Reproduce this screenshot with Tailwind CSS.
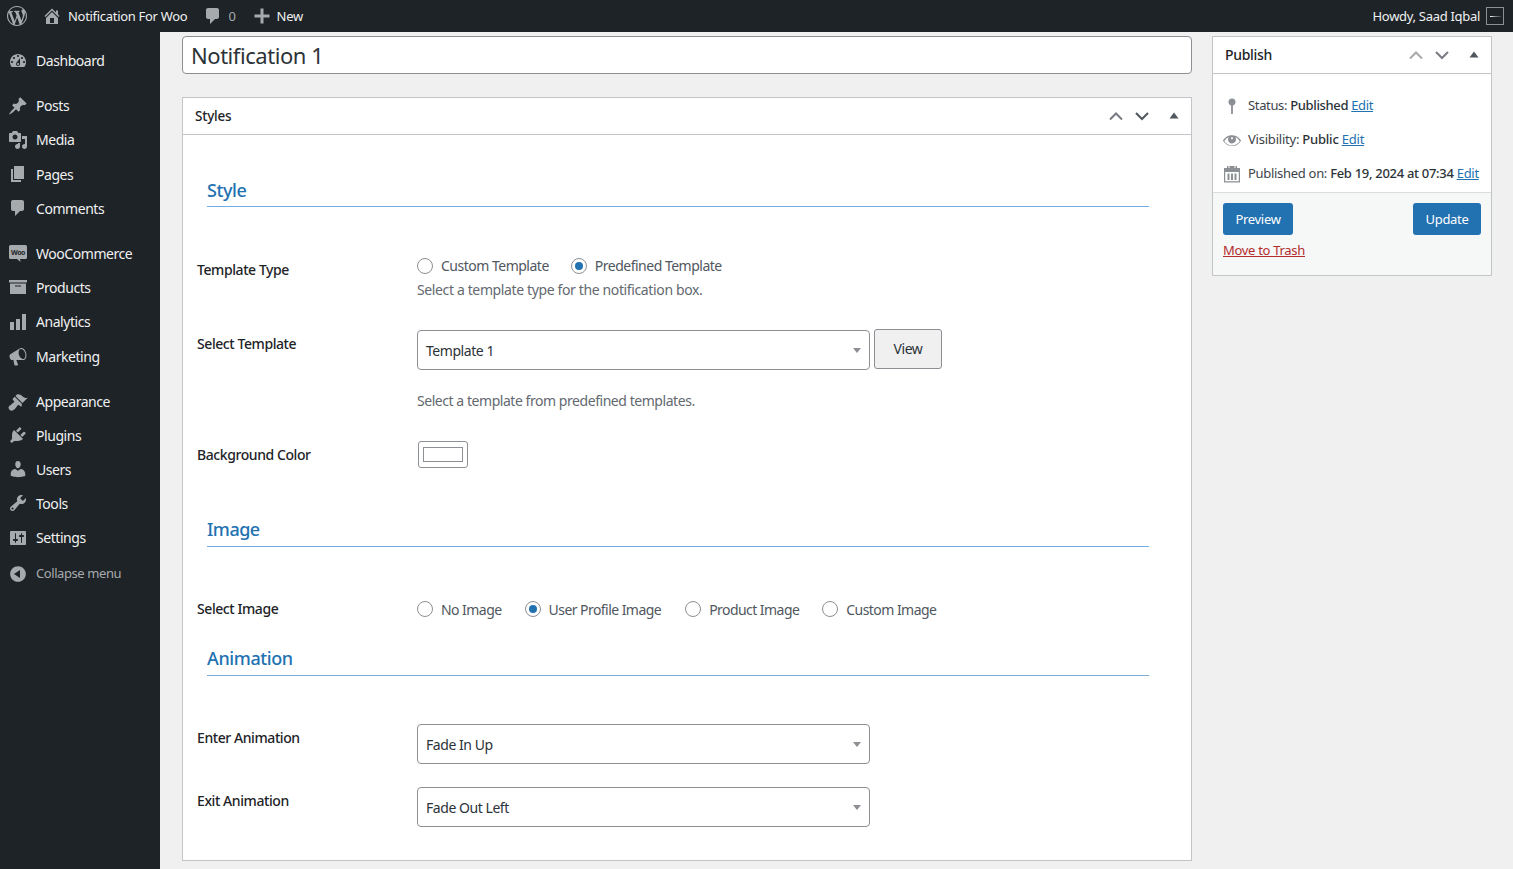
<!doctype html>
<html>
<head>
  <meta charset="UTF-8">
  <meta name="viewport" content="width=device-width, initial-scale=1.0">
  <title>Edit Notification</title>
  <script src="https://cdn.jsdelivr.net/npm/@tailwindcss/browser@4"></script>
</head>
<body class="bg-[#f0f0f1] font-['Noto_Sans',sans-serif] text-[13px] text-[#3c434a] overflow-hidden">
<div class="flex h-[869px] w-[1513px] flex-col overflow-hidden">

  <!-- Admin bar -->
  <header class="flex h-8 shrink-0 items-center bg-[#1d2327] text-[13px] tracking-[-0.3px] text-[#f0f0f1]">
    <svg class="ml-[7px] h-5 w-5 fill-[#a7aaad]" viewBox="0 0 20 20"><path d="M20 10c0-5.51-4.49-10-10-10C4.48 0 0 4.49 0 10c0 5.52 4.48 10 10 10 5.51 0 10-4.48 10-10zM7.78 15.37L4.37 6.22c.55-.02 1.17-.08 1.17-.08.5-.06.44-1.13-.06-1.11 0 0-1.45.11-2.37.11-.18 0-.37 0-.58-.01C4.12 2.69 6.87 1.11 10 1.11c2.33 0 4.45.87 6.05 2.34-.68-.11-1.65.39-1.65 1.58 0 .74.45 1.36.9 2.1.35.61.55 1.36.55 2.46 0 1.49-1.4 5-1.4 5l-3.03-8.37c.54-.02.82-.17.82-.17.5-.05.44-1.25-.06-1.22 0 0-1.44.12-2.38.12-.87 0-2.33-.12-2.33-.12-.5-.03-.56 1.2-.06 1.22l.92.08 1.26 3.41zM17.41 10c.24-.64.74-1.87.43-4.25.7 1.29 1.05 2.71 1.05 4.25 0 3.29-1.73 6.24-4.4 7.78.97-2.59 1.94-5.21 2.92-7.78zM6.1 18.09C3.12 16.65 1.11 13.53 1.11 10c0-1.3.23-2.48.72-3.59C3.25 10.3 4.67 14.2 6.1 18.09zm4.03-6.63l2.58 6.98c-.86.29-1.76.45-2.71.45-.79 0-1.57-.11-2.29-.33.81-2.38 1.62-4.74 2.42-7.1z"/></svg>
    <svg class="ml-[15px] h-5 w-5 fill-[#a7aaad]" viewBox="0 0 20 20"><path d="M16 8.5l1.53 1.53-1.06 1.06L10 4.62l-6.47 6.47-1.06-1.06L10 2.5l4 4v-2h2v4zm-6-2.46l6 5.99V18H4v-5.97zM12 17v-5H8v5h4z"/></svg>
    <span class="ml-[6px] pt-[2px]">Notification For Woo</span>
    <svg class="ml-[16px] h-5 w-5 fill-[#a7aaad]" viewBox="0 0 20 20"><path d="M5 2h9c1.1 0 2 .9 2 2v7c0 1.1-.9 2-2 2h-2l-5 5v-5H5c-1.1 0-2-.9-2-2V4c0-1.1.9-2 2-2z"/></svg>
    <span class="ml-[5px] pt-[2px] text-[#a7aaad]">0</span>
    <svg class="ml-[16px] h-5 w-5 fill-[#a7aaad]" viewBox="0 0 20 20"><path d="M17.5 8.5v3h-6v6h-3v-6h-6v-3h6v-6h3v6z"/></svg>
    <span class="ml-[5px] pt-[2px]">New</span>
    <span class="ml-auto pt-[2px]">Howdy, Saad Iqbal</span>
    <span class="ml-[6px] mr-[9px] flex h-[18px] w-[18px] items-center justify-center border border-[#8c8f94] bg-[#1d2327]"><span class="h-px w-[11px] bg-gradient-to-r from-white via-[#888] to-[#444]"></span></span>
  </header>

  <div class="flex min-h-0 flex-1">
    <!-- Sidebar -->
    <aside class="w-40 shrink-0 bg-[#1d2327] pt-[11.6px] text-[14px] tracking-[-0.45px] text-[#f0f0f1]">
      <nav class="flex flex-col">
        <a class="flex h-[34.2px] items-center gap-2 pl-2"><svg class="h-5 w-5 fill-[#a7aaad]" viewBox="0 0 20 20"><path d="M3.76 16h12.48c1.1-1.37 1.76-3.11 1.76-5 0-4.42-3.58-8-8-8s-8 3.58-8 8c0 1.89.66 3.63 1.76 5zM10 4c.55 0 1 .45 1 1s-.45 1-1 1-1-.45-1-1 .45-1 1-1zM6 6c.55 0 1 .45 1 1s-.45 1-1 1-1-.45-1-1 .45-1 1-1zm8 0c.55 0 1 .45 1 1s-.45 1-1 1-1-.45-1-1 .45-1 1-1zm-5.37 5.55L12 7v6c0 1.1-.9 2-2 2s-2-.9-2-2c0-.57.24-1.08.63-1.45zM4 10c.55 0 1 .45 1 1s-.45 1-1 1-1-.45-1-1 .45-1 1-1zm12 0c.55 0 1 .45 1 1s-.45 1-1 1-1-.45-1-1 .45-1 1-1zm-5 3c0-.55-.45-1-1-1s-1 .45-1 1 .45 1 1 1 1-.45 1-1z"/></svg>Dashboard</a>
        <a class="mt-[10.8px] flex h-[34.2px] items-center gap-2 pl-2"><svg class="h-5 w-5 fill-[#a7aaad]" viewBox="0 0 20 20"><path d="M10.44 3.02l1.82-1.82 6.36 6.35-1.83 1.82c-1.05-.68-2.48-.57-3.41.36l-.75.75c-.92.93-1.04 2.35-.35 3.41l-1.83 1.82-2.41-2.41-2.8 2.79c-.42.42-3.38 2.71-3.8 2.29s1.86-3.39 2.28-3.81l2.79-2.79L4.1 9.36l1.83-1.82c1.05.69 2.48.57 3.41-.36l.75-.75c.93-.92 1.05-2.35.35-3.41z"/></svg>Posts</a>
        <a class="flex h-[34.2px] items-center gap-2 pl-2"><svg class="h-5 w-5 fill-[#a7aaad]" viewBox="0 0 20 20"><path d="M13 11V4c0-.55-.45-1-1-1h-1.67L9 1H5L3.67 3H2c-.55 0-1 .45-1 1v7c0 .55.45 1 1 1h10c.55 0 1-.45 1-1zM7 4.5c1.38 0 2.5 1.12 2.5 2.5S8.38 9.5 7 9.5 4.5 8.38 4.5 7 5.62 4.5 7 4.5zM14 6h5v10.5c0 1.38-1.12 2.5-2.5 2.5S14 17.88 14 16.5s1.12-2.5 2.5-2.5c.17 0 .34.02.5.05V9h-3V6zm-4 8.05V13h2v3.5c0 1.38-1.12 2.5-2.5 2.5S7 17.88 7 16.5 8.12 14 9.5 14c.17 0 .34.02.5.05z"/></svg>Media</a>
        <a class="flex h-[34.2px] items-center gap-2 pl-2"><svg class="h-5 w-5 fill-[#a7aaad]" viewBox="0 0 20 20"><path d="M6 15V2h10v13H6zm-1 1h8v2H3V5h2v11z"/></svg>Pages</a>
        <a class="flex h-[34.2px] items-center gap-2 pl-2"><svg class="h-5 w-5 fill-[#a7aaad]" viewBox="0 0 20 20"><path d="M5 2h9c1.1 0 2 .9 2 2v7c0 1.1-.9 2-2 2h-2l-5 5v-5H5c-1.1 0-2-.9-2-2V4c0-1.1.9-2 2-2z"/></svg>Comments</a>
        <a class="mt-[10.8px] flex h-[34.2px] items-center gap-2 pl-2"><svg class="h-5 w-5" viewBox="0 0 20 20"><path class="fill-[#a7aaad]" d="M2.5 2h15A1.5 1.5 0 0 1 19 3.500v11a1.500 1.500 0 0 1-1.500 1.500H12l.500 3-3.500-3H2.500A1.500 1.500 0 0 1 1 14.500v-11A1.500 1.500 0 0 1 2.500 2z"/><text x="10" y="11.500" text-anchor="middle" font-size="7" font-weight="700" class="fill-[#1d2327]">Woo</text></svg>WooCommerce</a>
        <a class="flex h-[34.2px] items-center gap-2 pl-2"><svg class="h-5 w-5 fill-[#a7aaad]" viewBox="0 0 20 20"><path fill-rule="evenodd" d="M19 3v2.500H1V3h18zM2 6.500h16V17H2V6.500zm11 3V8.500H7v1h6z"/></svg>Products</a>
        <a class="flex h-[34.2px] items-center gap-2 pl-2"><svg class="h-5 w-5 fill-[#a7aaad]" viewBox="0 0 20 20"><path d="M18 18V2h-4v16h4zm-6 0V7H8v11h4zm-6 0v-8H2v8h4z"/></svg>Analytics</a>
        <a class="mt-[0.8px] flex h-[34.2px] items-center gap-2 pl-2"><svg class="h-5 w-5 fill-[#a7aaad]" viewBox="0 0 20 20"><path fill-rule="evenodd" d="M18.150 5.940c.46 1.620.38 3.220-.02 4.480-.42 1.280-1.260 2.180-2.300 2.480-.16.06-.26.06-.4.06-.060.020-.12.020-.18.020-.060.020-.14.020-.22.020H8.300l1.700 4.600c.1.400-.2.800-.600.800H6.950c-.3 0-.5-.2-.55-.5l-1-4.900H4.250c-.5.060-1.080-.18-1.540-.62s-.88-1.080-1.060-1.880c-.24-.8-.2-1.560-.02-2.200.18-.62.58-1.080 1.060-1.300l9-5.420c.1-.06.18-.1.24-.16.3-.14.5-.22.74-.3 1.040-.3 2.240.1 3.220 1 .98.88 1.800 2.240 2.260 3.860zm-2.580 5.980c.4-.1.740-.34 1.040-.7.580-.7.860-1.760.86-3.040-.02-.64-.12-1.300-.3-2-.45-1.560-1.360-2.850-2.400-3.600-.8-.56-1.600-.8-2.300-.6-.38.1-.7.34-1 .68-.6.72-.88 1.760-.86 3.040 0 .64.1 1.300.3 2 .44 1.580 1.360 2.860 2.400 3.600.8.56 1.540.8 2.260.62z"/></svg>Marketing</a>
        <a class="mt-[10.8px] flex h-[34.2px] items-center gap-2 pl-2"><svg class="h-5 w-5 fill-[#a7aaad]" viewBox="0 0 20 20"><path d="M14.480 11.060L7.410 3.990l1.500-1.500c.5-.56 2.300-.47 3.510.32 1.210.8 1.430 1.280 2.910 2.100 1.180.64 2.450 1.260 4.450.85zm-.71.71L6.700 4.700 4.930 6.470c-.39.39-.39 1.020 0 1.410l1.060 1.060c.39.39.39 1.030 0 1.420-.6.6-1.430 1.110-2.210 1.690-.35.26-.7.53-1.010.84C1.430 13.230.5 14.88.5 15.400c0 .51.38 1.630 1.010 2.260.62.62 1.740 1.010 2.260 1.010.51 0 2.170-.93 3.510-2.270.31-.31.58-.66.84-1.010.58-.78 1.090-1.610 1.690-2.210.39-.39 1.030-.39 1.420 0l1.060 1.060c.39.39 1.020.39 1.410 0z"/></svg>Appearance</a>
        <a class="flex h-[33.4px] items-center gap-2 pl-2"><svg class="h-5 w-5 fill-[#a7aaad]" viewBox="0 0 20 20"><path d="M13.110 4.360L9.870 7.600 8 5.730l3.240-3.240c.35-.34 1.050-.2 1.560.32.52.51.66 1.210.31 1.550zm-8 1.770l.91-1.120 9.010 9.010-1.190.84c-.71.71-2.630 1.160-3.820 1.160H6.140L4.900 17.260c-.59.59-1.540.59-2.120 0-.59-.58-.59-1.530 0-2.120l1.240-1.240v-3.880c0-1.130.4-3.190 1.090-3.890zm7.260 3.970l3.240-3.240c.34-.35 1.040-.21 1.550.31.52.51.66 1.210.31 1.550l-3.240 3.250z"/></svg>Plugins</a>
        <a class="flex h-[34.2px] items-center gap-2 pl-2"><svg class="h-5 w-5 fill-[#a7aaad]" viewBox="0 0 20 20"><path d="M10 9.250c-2.270 0-2.730-3.440-2.730-3.440C7 4.020 7.820 2 9.970 2c2.160 0 2.980 2.020 2.710 3.810 0 0-.41 3.440-2.680 3.440zm0 2.570L12.720 10c2.390 0 4.520 2.330 4.520 4.530v2.490s-3.650 1.130-7.240 1.130c-3.650 0-7.240-1.130-7.240-1.130v-2.490c0-2.250 1.940-4.480 4.470-4.480z"/></svg>Users</a>
        <a class="flex h-[34.2px] items-center gap-2 pl-2"><svg class="h-5 w-5 fill-[#a7aaad]" viewBox="0 0 20 20"><path fill-rule="evenodd" d="M16.680 9.770c-1.340 1.340-3.300 1.670-4.950.99l-5.410 6.520c-.99.99-2.590.99-3.580 0s-.99-2.59 0-3.570l6.520-5.420c-.68-1.650-.35-3.610.99-4.950 1.280-1.280 3.120-1.620 4.720-1.060l-2.890 2.890 2.820 2.820 2.860-2.870c.53 1.580.18 3.390-1.080 4.650zM3.810 16.210c.4.39 1.040.39 1.430 0 .4-.4.4-1.040 0-1.430-.39-.4-1.030-.4-1.430 0-.39.39-.39 1.030 0 1.430z"/></svg>Tools</a>
        <a class="flex h-[34.2px] items-center gap-2 pl-2"><svg class="h-5 w-5 fill-[#a7aaad]" viewBox="0 0 20 20"><path fill-rule="evenodd" d="M18 16V4c0-.55-.45-1-1-1H3c-.55 0-1 .45-1 1v12c0 .55.45 1 1 1h14c.55 0 1-.45 1-1zM8 11h1c.55 0 1 .45 1 1s-.45 1-1 1H8v1.500c0 .28-.22.5-.5.5s-.5-.22-.5-.5V13H6c-.55 0-1-.45-1-1s.45-1 1-1h1V5.500c0-.28.22-.5.5-.5s.5.22.5.5V11zm5-2h-1c-.55 0-1-.45-1-1s.45-1 1-1h1V5.500c0-.28.22-.5.5-.5s.5.22.5.5V7h1c.55 0 1 .45 1 1s-.45 1-1 1h-1v5.500c0 .28-.22.5-.5.5s-.5-.22-.5-.5V9z"/></svg>Settings</a>
        <a class="mt-[2px] flex h-[34.2px] items-center gap-2 pl-2 text-[13px] tracking-[-0.42px] text-[#a7aaad]"><svg class="h-5 w-5 fill-[#a7aaad]" viewBox="0 0 20 20"><path fill-rule="evenodd" d="M10 2.160c4.330 0 7.840 3.510 7.840 7.840s-3.510 7.840-7.840 7.840-7.840-3.510-7.840-7.840S5.670 2.160 10 2.160zM12 14V6l-6 4z"/></svg>Collapse menu</a>
      </nav>
    </aside>

    <!-- Main -->
    <main class="flex min-w-0 flex-1 items-start gap-5 pl-[22px] pt-1">
      <div class="w-[1010px] shrink-0">
        <div class="flex h-[38px] items-center rounded border border-[#8c8f94] bg-white pl-2 text-[22px] tracking-[-0.45px] text-[#2c3338]">Notification 1</div>

        <section class="mt-[23px] h-[764px] border border-[#c3c4c7] bg-white text-[14px] tracking-[-0.45px]">
          <div class="flex h-[37px] items-center border-b border-[#c3c4c7] pl-3 pr-[12px] text-[13.5px] font-medium tracking-[-0.2px] text-[#1d2327]">
            <span>Styles</span>
            <svg class="ml-auto h-4 w-4 text-[#787c82]" viewBox="0 0 16 16" fill="none" stroke="currentColor" stroke-width="2"><path d="M2 11.500L8 5.500l6 6"/></svg>
            <svg class="ml-[10px] h-4 w-4 text-[#50575e]" viewBox="0 0 16 16" fill="none" stroke="currentColor" stroke-width="2"><path d="M2 5l6 6 6-6"/></svg>
            <svg class="ml-[18px] -mr-px h-3 w-3 fill-[#50575e]" viewBox="0 0 12 12"><path d="M6 2.500l4.500 6h-9z"/></svg>
          </div>

          <div class="pl-[14px]">
            <h2 class="ml-[10px] mt-10 flex h-[32px] w-[942px] items-center border-b border-[#72aee6] text-[18px] font-medium tracking-[-0.4px] text-[#2271b1]">Style</h2>

            <div class="mt-12 flex">
              <div class="mt-1 w-[220px] font-medium leading-[22px] tracking-[-0.42px] text-[#1d2327]">Template Type</div>
              <div>
                <div class="flex h-[22px] items-center tracking-[-0.5px] text-[#50575e]">
                  <span class="h-4 w-4 rounded-full border border-[#8c8f94] bg-white"></span><span class="ml-2 pb-[2px]">Custom Template</span>
                  <span class="ml-[22px] flex h-4 w-4 items-center justify-center rounded-full border border-[#8c8f94] bg-white"><span class="h-2 w-2 rounded-full bg-[#2271b1]"></span></span><span class="ml-2 pb-[2px]">Predefined Template</span>
                </div>
                <p class="mt-[2px] leading-[22px] tracking-[-0.37px] text-[#646970]">Select a template type for the notification box.</p>
              </div>
            </div>

            <div class="mt-7 flex">
              <div class="mt-1 w-[220px] font-medium leading-[22px] tracking-[-0.42px] text-[#1d2327]">Select Template</div>
              <div>
                <div class="flex items-start">
                  <div class="mt-px flex h-10 w-[453px] items-center justify-between rounded border border-[#8c8f94] bg-white pl-2 pr-2 text-[#2c3338]">Template 1<span class="h-0 w-0 border-x-4 border-t-[5px] border-x-transparent border-t-[#8c8f94]"></span></div>
                  <button class="ml-1 h-10 w-[68px] rounded-[3px] border border-[#8c8f94] bg-[#f0f0f1] pb-[2px] text-[#2c3338]">View</button>
                </div>
                <p class="mt-5 leading-[22px] text-[#646970]">Select a template from predefined templates.</p>
              </div>
            </div>

            <div class="mt-[29px] flex">
              <div class="mt-[3px] w-[220px] font-medium leading-[22px] tracking-[-0.42px] text-[#1d2327]">Background Color</div>
              <div class="ml-px flex h-[27px] w-[50px] items-center justify-center rounded-[3px] border border-[#8c8f94] bg-white"><span class="h-[15px] w-10 border border-[#8c8f94] bg-white"></span></div>
            </div>

            <h2 class="ml-[10px] mt-[47px] flex h-[32px] w-[942px] items-center border-b border-[#72aee6] pb-[2px] text-[18px] font-medium tracking-[-0.5px] text-[#2271b1]">Image</h2>

            <div class="mt-[51px] flex h-[22px] items-center">
              <div class="mb-[2px] w-[220px] font-medium tracking-[-0.42px] text-[#1d2327]">Select Image</div>
              <div class="flex items-center tracking-[-0.55px] text-[#50575e]">
                <span class="h-4 w-4 rounded-full border border-[#8c8f94] bg-white"></span><span class="ml-2">No Image</span>
                <span class="ml-[23px] flex h-4 w-4 items-center justify-center rounded-full border border-[#8c8f94] bg-white"><span class="h-2 w-2 rounded-full bg-[#2271b1]"></span></span><span class="ml-2">User Profile Image</span>
                <span class="ml-6 h-4 w-4 rounded-full border border-[#8c8f94] bg-white"></span><span class="ml-2">Product Image</span>
                <span class="ml-[23px] h-4 w-4 rounded-full border border-[#8c8f94] bg-white"></span><span class="ml-2">Custom Image</span>
              </div>
            </div>

            <h2 class="ml-[10px] mt-6 flex h-[32px] w-[942px] items-center border-b border-[#2271b1]/60 pb-[2px] text-[18px] font-medium tracking-[-0.4px] text-[#2271b1]">Animation</h2>

            <div class="mt-12 flex">
              <div class="mt-[3px] w-[220px] font-medium leading-[22px] tracking-[-0.42px] text-[#1d2327]">Enter Animation</div>
              <div class="flex h-10 w-[453px] items-center justify-between rounded border border-[#8c8f94] bg-white pl-2 pr-2 text-[#2c3338]">Fade In Up<span class="h-0 w-0 border-x-4 border-t-[5px] border-x-transparent border-t-[#8c8f94]"></span></div>
            </div>

            <div class="mt-[23px] flex">
              <div class="mt-[3px] w-[220px] font-medium leading-[22px] tracking-[-0.42px] text-[#1d2327]">Exit Animation</div>
              <div class="flex h-10 w-[453px] items-center justify-between rounded border border-[#8c8f94] bg-white pl-2 pr-2 text-[#2c3338]">Fade Out Left<span class="h-0 w-0 border-x-4 border-t-[5px] border-x-transparent border-t-[#8c8f94]"></span></div>
            </div>
          </div>
        </section>
      </div>

      <!-- Publish box -->
      <aside class="w-[280px] shrink-0 border border-[#c3c4c7] bg-white tracking-[-0.3px]">
        <div class="flex h-[37px] items-center border-b border-[#c3c4c7] pl-3 pr-[12px] text-[14px] font-medium text-[#1d2327]">
          <span class="pb-[2px]">Publish</span>
          <svg class="ml-auto h-4 w-4 text-[#a7aaad]" viewBox="0 0 16 16" fill="none" stroke="currentColor" stroke-width="2"><path d="M2 11.500L8 5.500l6 6"/></svg>
          <svg class="ml-[10px] h-4 w-4 text-[#787c82]" viewBox="0 0 16 16" fill="none" stroke="currentColor" stroke-width="2"><path d="M2 5l6 6 6-6"/></svg>
          <svg class="ml-[18px] -mr-px h-3 w-3 fill-[#50575e]" viewBox="0 0 12 12"><path d="M6 2.500l4.500 6h-9z"/></svg>
        </div>
        <div class="h-[119px] border-b border-[#dcdcde] pt-[15px]">
          <div class="flex h-[34px] items-center pl-[9px]">
            <svg class="h-5 w-5 fill-[#8c8f94]" viewBox="0 0 20 20"><path d="M13.500 6A3.500 3.500 0 0 0 6.500 6c0 1.600 1.100 3 2.600 3.400V18h1.800V9.400c1.500-.4 2.600-1.800 2.600-3.400z"/></svg>
            <span class="ml-[6px] tracking-[-0.35px]">Status: <span class="font-medium text-[#2c3338]">Published</span> <a class="text-[#2271b1] underline">Edit</a></span>
          </div>
          <div class="flex h-[34px] items-center pl-[9px]">
            <svg class="h-5 w-5 fill-[#8c8f94]" viewBox="0 0 20 20"><path d="M18.300 9.500C15 4.900 8.500 3.800 3.900 7.200c-1.200.9-2.200 2.100-3 3.400.2.400.5.8.8 1.200 3.300 4.600 9.600 5.600 14.200 2.400.9-.7 1.700-1.400 2.400-2.400.3-.4.5-.8.8-1.200-.3-.4-.5-.8-.8-1.100zm-8.300-2.300c.6 0 1 .4 1 1s-.4 1-1 1-1-.4-1-1 .4-1 1-1zm0 8.300c-3.100 0-6-1.600-7.700-4.200C3.500 9 5.100 7.800 7 7c-.7.7-1 1.500-1 2.400 0 2.200 1.700 4 4 4s4-1.700 4-3.900c0-.9-.3-1.800-.9-2.400 1.900.8 3.400 2 4.600 4.100-1.700 2.600-4.600 4.300-7.700 4.300z"/></svg>
            <span class="ml-[6px] tracking-[-0.22px]">Visibility: <span class="font-medium text-[#2c3338]">Public</span> <a class="text-[#2271b1] underline">Edit</a></span>
          </div>
          <div class="flex h-[34px] items-center pl-[9px]">
            <svg class="h-5 w-5 fill-[#8c8f94]" viewBox="0 0 20 20"><path fill-rule="evenodd" d="M5 2h1.500v2h1V2h5v2h1V2H15v2h3v14.500H2V4h3V2zM3.200 8v9.300h13.600V8H3.200zM5.500 9.500h2V16h-2V9.500zm3.500 0h2V16H9V9.500zm3.500 0h2V16h-2V9.500z"/></svg>
            <span class="ml-[6px] whitespace-nowrap">Published on: <span class="font-medium text-[#2c3338]">Feb 19, 2024 at 07:34</span> <a class="text-[#2271b1] underline">Edit</a></span>
          </div>
        </div>
        <div class="h-[82px] bg-[#f6f7f7] px-[10px] pt-[10px]">
          <div class="flex justify-between">
            <button class="h-8 w-[70px] rounded-[3px] bg-[#2271b1] pt-px text-white">Preview</button>
            <button class="h-8 w-[68px] rounded-[3px] bg-[#2271b1] pt-px text-white">Update</button>
          </div>
          <a class="mt-[5px] block leading-[20px] text-[#b32d2e] underline">Move to Trash</a>
        </div>
      </aside>
    </main>
  </div>
</div>
</body>
</html>
